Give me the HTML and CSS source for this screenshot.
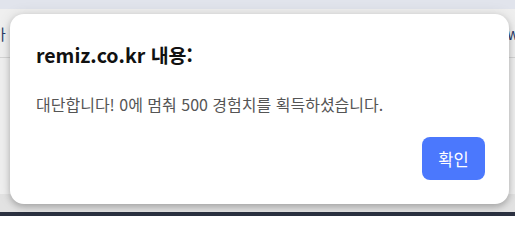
FILE: index.html
```html
<!DOCTYPE html>
<html lang="ko">
<head>
<meta charset="utf-8">
<link rel="stylesheet" href="styles.css">
</head>
<body>
<div class="page">
  <div class="topbar"></div>
  <div class="content">
    <div class="row">
      <span class="left-text">가</span>
      <span class="right-text">w</span>
    </div>
    <div class="rule"></div>
  </div>
  <div class="footer-shade"></div>
  <div class="bottombar"></div>
</div>
<div class="dialog">
  <h1 class="title">remiz.co.kr 내용:</h1>
  <p class="message">대단합니다! 0에 멈춰 500 경험치를 획득하셨습니다.</p>
  <div class="actions">
    <button class="ok">확인</button>
  </div>
</div>
</body>
</html>
```
FILE: styles.css
```css
html, body {
  margin: 0;
  padding: 0;
  width: 515px;
  height: 216px;
  overflow: hidden;
  font-family: "Noto Sans CJK KR", "Noto Sans", sans-serif;
}
.page {
  height: 216px;
  display: flex;
  flex-direction: column;
  background: #ececec;
}
.topbar {
  height: 9px;
  background: #e1e4ec;
}
.content {
  flex: 1;
  background: #efefef;
}
.row {
  height: 48px;
  display: flex;
  justify-content: space-between;
  align-items: center;
  font-size: 15px;
  color: #2a3a66;
}
.left-text {
  margin-left: -8px;
}
.right-text {
  margin-right: -4px;
}
.rule {
  height: 1px;
  background: #d4d4d4;
}
.footer-shade {
  height: 18px;
  background: #e2e2e2;
}
.bottombar {
  height: 4px;
  background: #2b3140;
}
.dialog {
  position: absolute;
  left: 10px;
  top: 14px;
  width: 499px;
  height: 190px;
  box-sizing: border-box;
  background: #ffffff;
  border-radius: 14px;
  box-shadow: 0 3px 6px rgba(0,0,0,0.22), 0 0 14px rgba(0,0,0,0.10);
  padding: 28px 24px 24px 26px;
  display: flex;
  flex-direction: column;
}
.title {
  margin: 0;
  font-size: 19.5px;
  font-weight: 700;
  line-height: 26px;
  color: #111111;
}
.message {
  margin: 25px 0 0 0;
  font-size: 16px;
  line-height: 22px;
  color: #555555;
}
.actions {
  margin-top: auto;
  display: flex;
  justify-content: flex-end;
}
.ok {
  width: 63px;
  height: 43px;
  border: none;
  border-radius: 8px;
  background: #4b78fd;
  color: #ffffff;
  font-family: "Noto Sans CJK KR", sans-serif;
  font-size: 16.5px;
  padding: 0;
}
```
